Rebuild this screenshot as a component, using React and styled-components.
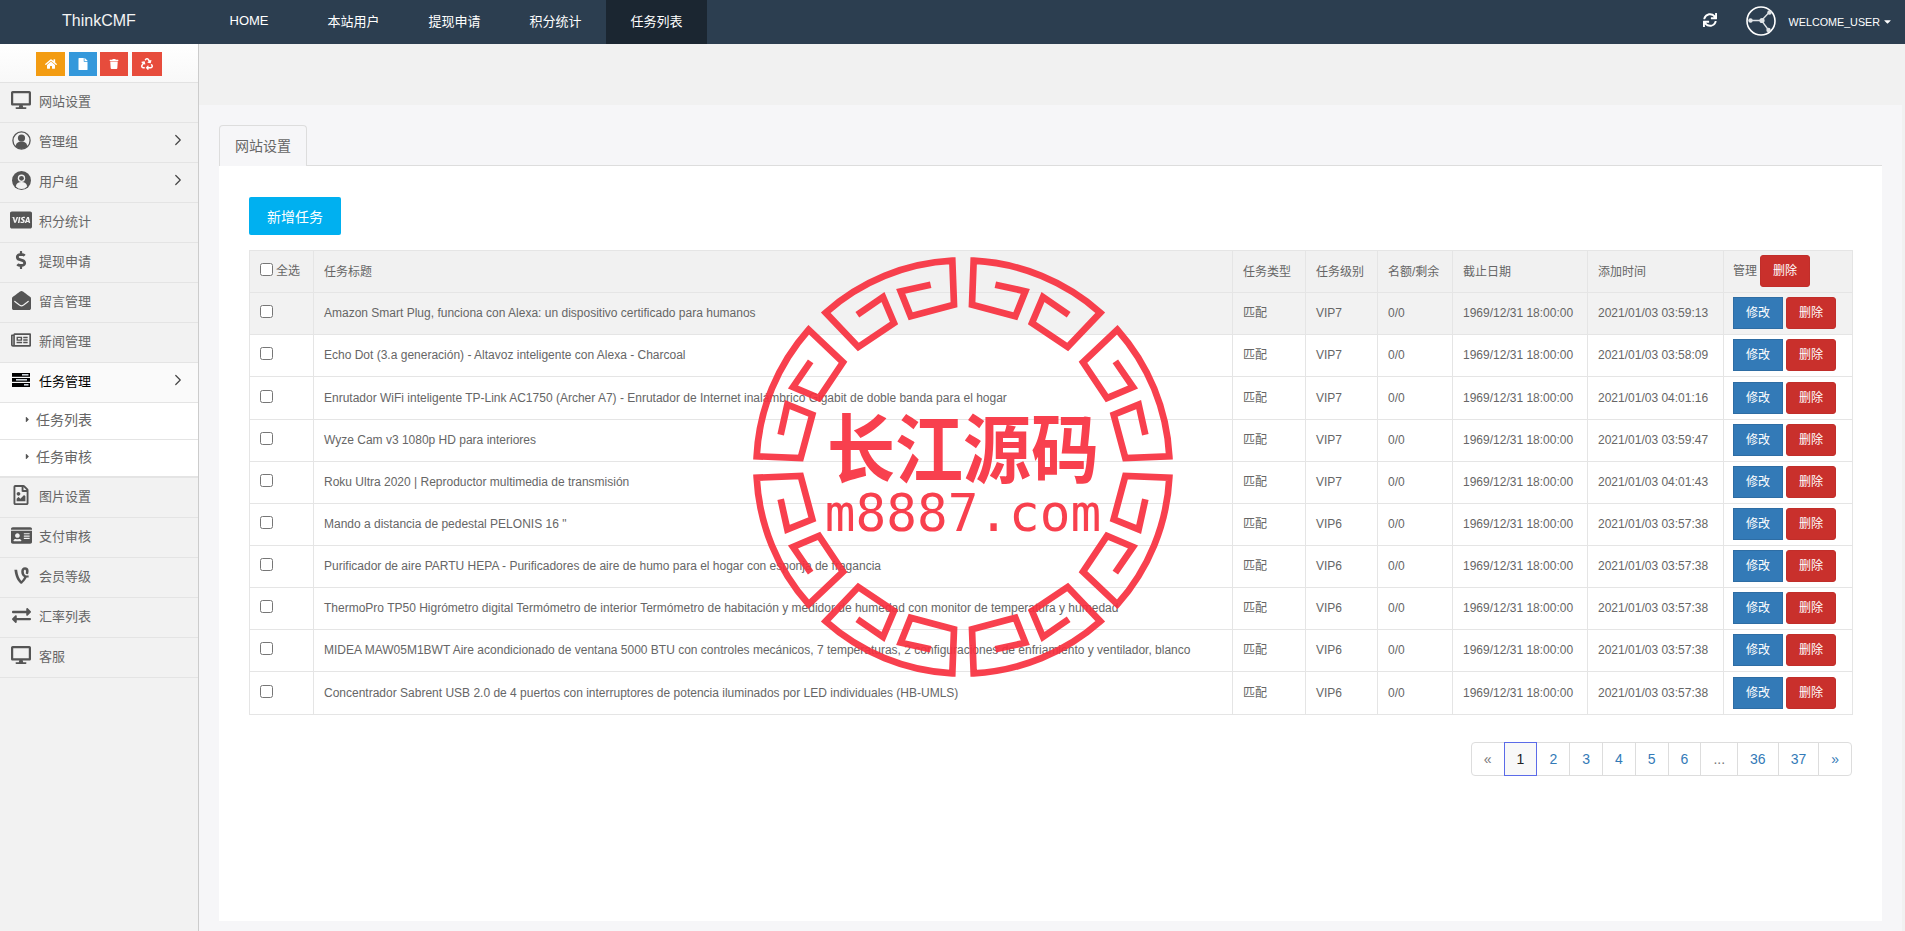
import React from 'react'
import styled, { createGlobalStyle } from 'styled-components'
import {
  FaHome, FaFile, FaTrash, FaRecycle, FaDesktop, FaCcVisa, FaDollarSign, FaEnvelopeOpen,
  FaRegNewspaper, FaRegFileImage, FaIdCard, FaVine, FaExchangeAlt, FaSync, FaCaretDown, FaCaretRight,
} from 'react-icons/fa'
import { ChevronRight } from 'lucide-react'

const SANS = `"Liberation Sans", "Noto Sans CJK SC", sans-serif`

const GlobalStyle = createGlobalStyle`
  html, body { margin: 0; padding: 0; height: 100%; overflow: hidden; }
  body { font-family: ${SANS}; font-size: 12px; color: #666; background: #f1f1f1; }
`

const ManagerIcon = () => (
  <svg width="19" height="19" viewBox="0 0 19 19">
    <circle cx="9.5" cy="9.5" r="8.6" fill="none" stroke="#555" strokeWidth="1.3" />
    <circle cx="9.5" cy="7" r="3.6" fill="#555" />
    <path d="M3.6 15.6c.5-3.6 2.6-5 5.9-5s5.4 1.4 5.9 5a8.4 8.4 0 0 1-11.800 0z" fill="#555" />
  </svg>
)

const UserIcon = () => (
  <svg width="19" height="19" viewBox="0 0 19 19">
    <circle cx="9.5" cy="9.500" r="9.500" fill="#555" />
    <circle cx="9.5" cy="7.300" r="3.700" fill="#f2f2f2" />
    <circle cx="9.5" cy="7.300" r="2.400" fill="#555" />
    <path d="M3.800 15.400c.6-3 2.700-4.300 5.700-4.300s5.100 1.300 5.700 4.300a7.600 7.600 0 0 1-11.400 0z" fill="#f2f2f2" />
  </svg>
)

const TasksIcon = () => (
  <svg width="18" height="14" viewBox="0 0 18 14">
    <rect y="0" width="18" height="3.800" fill="#000" />
    <rect y="5" width="18" height="3.800" fill="#000" />
    <rect y="10" width="18" height="4" fill="#000" />
    <rect x="10" y="1" width="6.500" height="1.600" fill="#cfd6dc" />
    <rect x="4" y="6" width="11" height="1.600" fill="#cfd6dc" />
    <rect x="12" y="11" width="4.500" height="1.600" fill="#cfd6dc" />
  </svg>
)

const NodesLogo = () => (
  <svg width="30" height="30" viewBox="0 0 30 30">
    <circle cx="15" cy="15" r="14" fill="none" stroke="#fff" strokeWidth="1.600" />
    <path d="M4 14.500h11.500L23 6.500M15.500 14.500L22.500 24" fill="none" stroke="#dfe3e6" strokeWidth="1.300" />
    <circle cx="4.500" cy="14.500" r="2.200" fill="#dfe3e6" />
    <circle cx="16" cy="14.500" r="2.600" fill="#dfe3e6" />
    <circle cx="23.500" cy="6.500" r="2.200" fill="#dfe3e6" />
    <circle cx="22.500" cy="24" r="2.200" fill="#dfe3e6" />
  </svg>
)

const meanderSegment = 'M97,-547 L187,-527 L157,-452 L27,-487 L32,-619 A620,620 0 0 1 412,-463 L314,-360 L207,-432 L240,-510 L317,-457'
const sealTransforms = [
  'matrix(1 0 0 1 0 0)', 'matrix(-1 0 0 1 0 0)', 'matrix(1 0 0 -1 0 0)', 'matrix(-1 0 0 -1 0 0)',
  'matrix(0 -1 -1 0 0 0)', 'matrix(0 1 -1 0 0 0)', 'matrix(0 -1 1 0 0 0)', 'matrix(0 1 1 0 0 0)',
]

const sideMenu = [
  { label: '网站设置', icon: <FaDesktop size={20} /> },
  { label: '管理组', icon: <ManagerIcon />, arrow: true },
  { label: '用户组', icon: <UserIcon />, arrow: true },
  { label: '积分统计', icon: <FaCcVisa size={24} /> },
  { label: '提现申请', icon: <FaDollarSign size={18} /> },
  { label: '留言管理', icon: <FaEnvelopeOpen size={19} /> },
  { label: '新闻管理', icon: <FaRegNewspaper size={20} /> },
  { label: '任务管理', icon: <TasksIcon />, arrow: true, active: true, children: ['任务列表', '任务审核'] },
  { label: '图片设置', icon: <FaRegFileImage size={20} /> },
  { label: '支付审核', icon: <FaIdCard size={21} /> },
  { label: '会员等级', icon: <FaVine size={19} /> },
  { label: '汇率列表', icon: <FaExchangeAlt size={19} /> },
  { label: '客服', icon: <FaDesktop size={20} /> },
]

const tasks = [
  ['Amazon Smart Plug, funciona con Alexa: un dispositivo certificado para humanos', 'VIP7', '03:59:13'],
  ['Echo Dot (3.a generación) - Altavoz inteligente con Alexa - Charcoal', 'VIP7', '03:58:09'],
  ['Enrutador WiFi inteligente TP-Link AC1750 (Archer A7) - Enrutador de Internet inalámbrico Gigabit de doble banda para el hogar', 'VIP7', '04:01:16', 43],
  ['Wyze Cam v3 1080p HD para interiores', 'VIP7', '03:59:47'],
  ['Roku Ultra 2020 | Reproductor multimedia de transmisión', 'VIP7', '04:01:43'],
  ['Mando a distancia de pedestal PELONIS 16 "', 'VIP6', '03:57:38'],
  ['Purificador de aire PARTU HEPA - Purificadores de aire de humo para el hogar con esponja de fragancia', 'VIP6', '03:57:38'],
  ['ThermoPro TP50 Higrómetro digital Termómetro de interior Termómetro de habitación y medidor de humedad con monitor de temperatura y humedad', 'VIP6', '03:57:38'],
  ['MIDEA MAW05M1BWT Aire acondicionado de ventana 5000 BTU con controles mecánicos, 7 temperaturas, 2 configuraciones de enfriamiento y ventilador, blanco', 'VIP6', '03:57:38'],
  ['Concentrador Sabrent USB 2.0 de 4 puertos con interruptores de potencia iluminados por LED individuales (HB-UMLS)', 'VIP6', '03:57:38', 43],
]

const pages = ['«', '1', '2', '3', '4', '5', '6', '...', '36', '37', '»']

export default function App() {
  return (
    <S.Page>
      <GlobalStyle />
      <S.Navbar>
        <S.Brand>ThinkCMF</S.Brand>
        <S.NavLink $home>HOME</S.NavLink>
        <S.NavLink>本站用户</S.NavLink>
        <S.NavLink>提现申请</S.NavLink>
        <S.NavLink>积分统计</S.NavLink>
        <S.NavLink $active>任务列表</S.NavLink>
        <S.NavRight>
          <S.Refresh><FaSync size={14} /></S.Refresh>
          <NodesLogo />
          <S.UserName>WELCOME_USER</S.UserName>
          <FaCaretDown size={11} />
        </S.NavRight>
      </S.Navbar>

      <S.Body>
        <S.Sidebar>
          <S.Shortcuts>
            <S.Shortcut $color="#f39c12" $width={29}><FaHome size={12} /></S.Shortcut>
            <S.Shortcut $color="#3498db" $width={28}><FaFile size={12} /></S.Shortcut>
            <S.Shortcut $color="#e74c3c" $width={28}><FaTrash size={10} /></S.Shortcut>
            <S.Shortcut $color="#e74c3c" $width={30}><FaRecycle size={12} /></S.Shortcut>
          </S.Shortcuts>
          {sideMenu.map(item => (
            <React.Fragment key={item.label}>
              <S.MenuItem $active={item.active}>
                <S.MenuIcon>{item.icon}</S.MenuIcon>
                <span>{item.label}</span>
                {item.arrow && <S.MenuArrow><ChevronRight size={18} strokeWidth={1.6} /></S.MenuArrow>}
              </S.MenuItem>
              {item.children && (
                <S.SubMenu>
                  {item.children.map(child => (
                    <S.SubItem key={child}><FaCaretRight size={9} />{child}</S.SubItem>
                  ))}
                </S.SubMenu>
              )}
            </React.Fragment>
          ))}
        </S.Sidebar>

        <S.Main>
          <S.TopBand />
          <S.Content>
            <S.Tabs><S.Tab>网站设置</S.Tab></S.Tabs>
            <S.Panel>
              <S.AddButton>新增任务</S.AddButton>
              <S.Table>
                <colgroup>
                  {[64, 919, 73, 72, 75, 135, 136, 129].map((w, i) => <col key={i} style={{ width: w }} />)}
                </colgroup>
                <thead>
                  <S.HeadRow>
                    <th><S.CheckLabel><S.Check type="checkbox" /> 全选</S.CheckLabel></th>
                    <th>任务标题</th>
                    <th>任务类型</th>
                    <th>任务级别</th>
                    <th>名额/剩余</th>
                    <th>截止日期</th>
                    <th>添加时间</th>
                    <S.ActionCell>
                      <S.Actions>管理<S.ActionButton $danger>删除</S.ActionButton></S.Actions>
                    </S.ActionCell>
                  </S.HeadRow>
                </thead>
                <tbody>
                  {tasks.map(([title, level, time, height], index) => (
                    <S.Row key={index} $hover={index === 0} $height={height || 42}>
                      <td><S.Check type="checkbox" /></td>
                      <td>{title}</td>
                      <td>匹配</td>
                      <td>{level}</td>
                      <td>0/0</td>
                      <td>1969/12/31 18:00:00</td>
                      <td>2021/01/03 {time}</td>
                      <S.ActionCell>
                        <S.Actions>
                          <S.ActionButton>修改</S.ActionButton>
                          <S.ActionButton $danger>删除</S.ActionButton>
                        </S.Actions>
                      </S.ActionCell>
                    </S.Row>
                  ))}
                </tbody>
              </S.Table>
              <S.Pagination>
                {pages.map((page, index) => (
                  <S.PageItem
                    key={index}
                    $active={page === '1'}
                    $muted={page === '«' || page === '...'}
                  >
                    {page}
                  </S.PageItem>
                ))}
              </S.Pagination>
            </S.Panel>
          </S.Content>
        </S.Main>
      </S.Body>

      <S.Seal>
        <svg width="420" height="420" viewBox="-630 -630 1260 1260">
          {sealTransforms.map(t => (
            <path key={t} d={meanderSegment} transform={t} fill="none" stroke="#f8303f" strokeWidth="20" />
          ))}
        </svg>
        <S.SealText>
          <S.SealTitle>长江源码</S.SealTitle>
          <S.SealUrl>m8887.com</S.SealUrl>
        </S.SealText>
      </S.Seal>
    </S.Page>
  )
}

const S = {
  Page: styled.div`
    position: relative;
    width: 100%;
    height: 100vh;
    display: flex;
    flex-direction: column;
    overflow: hidden;
  `,

  Navbar: styled.div`
    height: 44px;
    flex: none;
    display: flex;
    align-items: stretch;
    background: #2c3e50;
    color: #fff;
    font-size: 13px;
  `,

  Brand: styled.div`
    width: 205px;
    box-sizing: border-box;
    padding-left: 62px;
    font-size: 16px;
    line-height: 41px;
    color: #f4f4f4;
  `,

  NavLink: styled.div`
    display: flex;
    align-items: center;
    justify-content: flex-start;
    padding: 0 ${p => (p.$home ? '34.5px' : '24.5px')} 3px 24.5px;
    background: ${p => (p.$active ? '#1b2631' : 'transparent')};
  `,

  NavRight: styled.div`
    margin-left: auto;
    display: flex;
    align-items: center;
    padding: 0 12px 2px 0;
  `,

  Refresh: styled.span`
    display: flex;
    margin: 0 29px 2px 0;
  `,

  UserName: styled.span`
    margin: 1px 2px 0 13px;
    font-size: 10.75px;
  `,

  Body: styled.div`
    flex: 1;
    display: flex;
    min-height: 0;
  `,

  Sidebar: styled.div`
    width: 199px;
    flex: none;
    box-sizing: border-box;
    background: #f2f2f2;
    border-right: 1px solid #ccc;
  `,

  Shortcuts: styled.div`
    height: 39px;
    box-sizing: border-box;
    display: flex;
    gap: 3.500px;
    padding: 8px 0 0 36px;
    background: linear-gradient(#fff, #f8f8f8);
    border-bottom: 1px solid #e2e2e2;
  `,

  Shortcut: styled.span`
    width: ${p => p.$width}px;
    height: 24px;
    display: flex;
    align-items: center;
    justify-content: center;
    color: #fff;
    background: ${p => p.$color};
  `,

  MenuItem: styled.div`
    height: 40px;
    box-sizing: border-box;
    display: flex;
    align-items: center;
    padding: 0 0 5px 10px;
    font-size: 13px;
    color: ${p => (p.$active ? '#000' : '#666')};
    background: ${p => (p.$active ? '#fafafa' : '#f2f2f2')};
    border-bottom: 1px solid #e4e4e4;
  `,

  MenuIcon: styled.span`
    width: 22px;
    margin-right: 7px;
    display: flex;
    justify-content: center;
    color: #555;
    svg { display: block; }
  `,

  MenuArrow: styled.span`
    margin-left: auto;
    margin-right: 11px;
    display: flex;
    color: #444;
  `,

  SubMenu: styled.div`
    background: #fff;
    border-bottom: 2px solid #e4e4e4;
  `,

  SubItem: styled.div`
    height: 37px;
    box-sizing: border-box;
    display: flex;
    align-items: center;
    gap: 4px;
    padding: 0 0 4px 23px;
    font-size: 14px;
    color: #666;
    & + & { border-top: 1px solid #e4e4e4; }
    svg { color: #555; }
    &:first-child { height: 36px; }
  `,

  Main: styled.div`
    flex: 1;
    min-width: 0;
    display: flex;
    flex-direction: column;
    background: #f1f1f1;
  `,

  TopBand: styled.div`
    height: 60.500px;
    flex: none;
    background: #f1f1f1;
  `,

  Content: styled.div`
    flex: 1;
    min-height: 0;
    margin-right: 3px;
    padding: 20px 20px 10px;
    display: flex;
    flex-direction: column;
    background: #f6f6f8;
  `,

  Tabs: styled.div`
    display: flex;
    border-bottom: 1px solid #ddd;
    flex: none;
  `,

  Tab: styled.div`
    width: 88px;
    height: 41px;
    margin-bottom: -1px;
    padding-bottom: 2px;
    box-sizing: border-box;
    display: flex;
    align-items: center;
    justify-content: center;
    font-size: 14px;
    color: #666;
    background: #f6f6f8;
    border: 1px solid #ddd;
    border-bottom: 0;
    border-radius: 4px 4px 0 0;
  `,

  Panel: styled.div`
    flex: 1;
    padding: 31px 30px 0;
    background: #fff;
  `,

  AddButton: styled.div`
    width: 92px;
    height: 38px;
    margin-bottom: 15px;
    display: flex;
    align-items: center;
    justify-content: center;
    font-size: 14px;
    color: #fff;
    background: #00b0f0;
    border-radius: 2px;
  `,

  Table: styled.table`
    width: 1603px;
    table-layout: fixed;
    border-collapse: collapse;
    color: #666;
    font-size: 12px;
    th, td {
      padding: 0 10px;
      border: 1px solid #e5e5e5;
      text-align: left;
      font-weight: normal;
      line-height: 16px;
      white-space: nowrap;
      overflow: hidden;
    }
    th { padding-top: 2px; }
  `,

  HeadRow: styled.tr`
    height: 42px;
    background: #f1f1f1;
  `,

  Row: styled.tr`
    height: ${p => p.$height}px;
    background: ${p => (p.$hover ? '#f2f2f2' : '#fff')};
  `,

  CheckLabel: styled.label`
    display: flex;
    align-items: center;
    gap: 3px;
    margin-bottom: 2px;
  `,

  Check: styled.input`
    width: 13px;
    height: 13px;
    margin: 0 0 3px;
    display: block;
  `,

  ActionCell: styled.td`
    && { padding: 0 10px 0 9px; }
  `,

  Actions: styled.div`
    display: flex;
    align-items: center;
    gap: 3px;
  `,

  ActionButton: styled.span`
    width: 50px;
    height: 32px;
    box-sizing: border-box;
    display: flex;
    align-items: center;
    justify-content: center;
    color: #fff;
    background: ${p => (p.$danger ? '#c9302c' : '#337ab7')};
    border: 1px solid ${p => (p.$danger ? '#c12e2a' : '#2e6da4')};
    border-radius: ${p => (p.$danger ? '3px' : '0')};
  `,

  Pagination: styled.div`
    display: flex;
    justify-content: flex-end;
    margin-top: 27px;
  `,

  PageItem: styled.span`
    height: 34px;
    box-sizing: border-box;
    display: flex;
    align-items: center;
    justify-content: center;
    padding: 0 12px;
    margin-left: -1px;
    font-size: 14px;
    color: ${p => (p.$active ? '#222' : p.$muted ? '#777' : '#337ab7')};
    background: ${p => (p.$active ? '#f8f8f8' : '#fff')};
    border: 1px solid ${p => (p.$active ? '#5b6be8' : '#ddd')};
    position: ${p => (p.$active ? 'relative' : 'static')};
    &:first-child { border-radius: 4px 0 0 4px; }
    &:last-child { border-radius: 0 4px 4px 0; }
  `,

  Seal: styled.div`
    position: absolute;
    left: 753px;
    top: 257px;
    width: 420px;
    height: 420px;
    opacity: 0.92;
    pointer-events: none;
  `,

  SealText: styled.div`
    position: absolute;
    inset: 0;
    display: flex;
    flex-direction: column;
    align-items: center;
    padding-top: 146px;
    color: #f8303f;
  `,

  SealTitle: styled.div`
    font-family: "Noto Sans CJK SC", sans-serif;
    font-size: 68px;
    font-weight: 700;
    line-height: 83px;
    transform: scaleY(1.1);
  `,

  SealUrl: styled.div`
    font-family: "DejaVu Sans Mono", monospace;
    font-size: 51px;
    line-height: 56px;
  `,
}
